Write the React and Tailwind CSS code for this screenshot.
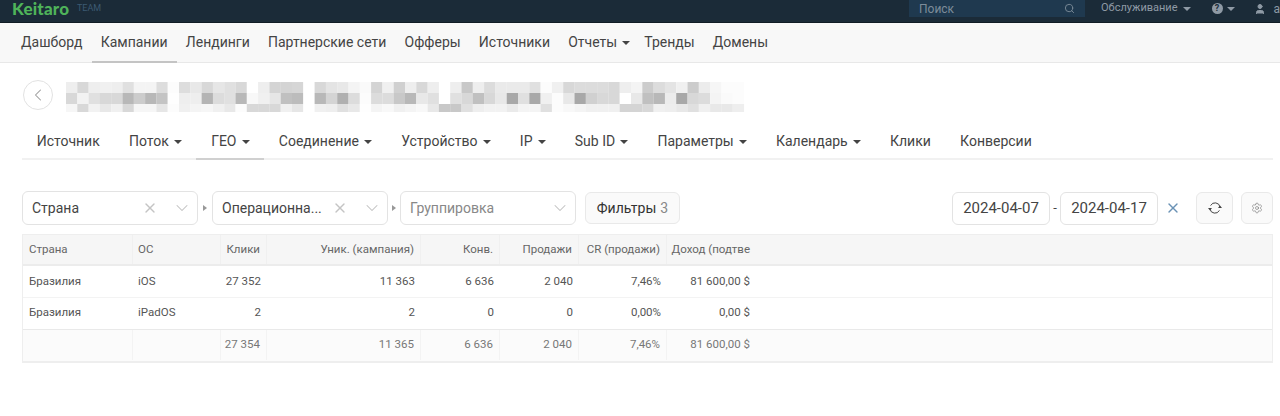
import { ChevronDown, ChevronLeft, Search, Settings, User, X } from 'lucide-react';

const mainNav = ['Дашборд', 'Кампании', 'Лендинги', 'Партнерские сети', 'Офферы', 'Источники', 'Отчеты', 'Тренды', 'Домены'];
const subNav = [
  ['Источник', false], ['Поток', true], ['ГЕО', true], ['Соединение', true], ['Устройство', true],
  ['IP', true], ['Sub ID', true], ['Параметры', true], ['Календарь', true], ['Клики', false], ['Конверсии', false],
];

const columns = [
  { label: 'Страна', w: 'w-[110px]' },
  { label: 'ОС', w: 'w-[88px]' },
  { label: 'Клики', w: 'w-[46px]', right: true },
  { label: 'Уник. (кампания)', w: 'w-[154px]', right: true },
  { label: 'Конв.', w: 'w-[79px]', right: true },
  { label: 'Продажи', w: 'w-[79px]', right: true },
  { label: 'CR (продажи)', w: 'w-[88px]', right: true },
  { label: 'Доход (подтве', w: 'w-[89px]', right: true },
];
const rows = [
  ['Бразилия', 'iOS', '27 352', '11 363', '6 636', '2 040', '7,46%', '81 600,00 $'],
  ['Бразилия', 'iPadOS', '2', '2', '0', '0', '0,00%', '0,00 $'],
];
const totals = ['', '', '27 354', '11 365', '6 636', '2 040', '7,46%', '81 600,00 $'];

function Caret() {
  return <span className="ml-[5px] inline-block border-x-[4px] border-t-[4px] border-x-transparent border-t-current align-middle" />;
}

// размытый заголовок кампании, значения серого по ячейкам
const mosaic = [
  'ee d8 ee f0 ee e0 f4 f4 dd fc dd e8 d8 e6 e0 d8 ff ee d4 d4 d6 ff d8 e4 e8 f4 fa d4 f0 d0 ee d8 ee ff ee c8 ee dc ea ea ea e0 fc f0 d8 dc dc dc d8 ee f4 cc dc e4 f0 cc ec f6 fc fc',
  'd8 f2 e0 d8 d8 b8 cc b8 c4 fe ee ee b4 dc e0 b8 f8 f0 e6 c0 bc ff b8 d4 b0 dc fc dc dc c8 b8 e8 e0 ff e0 d8 c0 d8 e8 a8 e0 a8 f0 fc e8 a8 d0 d8 d8 ff e8 c0 b8 ec a8 d8 dc f4 fa fc',
  'f6 d8 f2 e8 f0 d8 f6 f6 e6 fc f0 f4 f6 f0 e8 fc d8 d8 d8 f0 e6 ff f0 ee e0 e8 fe f4 f8 f0 f4 f8 e8 c8 c8 e0 ee f2 f2 ea f4 f4 e0 fc f8 f4 f0 f0 f0 d4 d4 d8 f0 ee e8 e0 f0 e8 e8 ee',
];
const mosaicY = [0, 11, 22];
const mosaicH = [11, 11, 8];

function Mosaic() {
  return (
    <svg width="680" height="30" viewBox="0 0 680 30" className="block">
      {mosaic.flatMap((row, y) =>
        row.split(' ').map((v, x) => (
          <rect key={`${x}-${y}`} x={x * 11.3} y={mosaicY[y]} width="11.4" height={mosaicH[y]} fill={`#${v}${v}${v}`} />
        ))
      )}
    </svg>
  );
}

function RefreshIcon() {
  return (
    <svg width="14" height="14" viewBox="0 0 14 14" fill="none">
      <path d="M2.6 4.6A5 5 0 0 1 12 6M11.4 9.4A5 5 0 0 1 2 8" stroke="#444" strokeWidth="1" />
      <path d="M0 7h4L2 9.4zM10 7h4L12 4.6z" fill="#444" />
    </svg>
  );
}

function Select({ text, clear, placeholder }) {
  return (
    <div className="w-[176px] h-[34px] flex items-center pl-[9px] pr-[5px] bg-white border border-[#e3e3e3] rounded-md text-[14px]">
      <span className={`flex-1 ${placeholder ? 'text-[#888]' : 'text-[#444]'}`}>{text}</span>
      {clear && <X size={16} strokeWidth={2} className="text-[#c4c4c4] mr-[14px]" />}
      <ChevronDown size={20} strokeWidth={1.25} className="text-[#c0c0c0]" />
    </div>
  );
}

export default function App() {
  return (
    <div className="h-[416px] overflow-hidden bg-white font-['Roboto',sans-serif] text-[#444]">
      <header className="h-[23px] bg-[#1b2b38] border-b border-[#111c25] flex items-start pl-3 text-[#8c99a5] overflow-hidden">
        <div className="h-[17px] flex items-center shrink-0">
          <span className="text-[#4fb35a] text-[17px] tracking-[0.2px] font-black leading-[17px] font-['Lato',sans-serif] w-[65px]">Keitaro</span>
          <span className="text-[#3c5a72] text-[9px] w-[24px]">TEAM</span>
        </div>
        <div className="ml-[808px] flex items-center h-[17px] shrink-0">
          <div className="w-[176px] h-full bg-[#1f394f] flex items-center justify-between px-[10px] text-[#7d8c99] text-[12px]">
            <span>Поиск</span>
            <Search size={11} />
          </div>
          <span className="ml-4 flex items-center text-[11px] text-[#8f9aa5]">Обслуживание<Caret /></span>
          <span className="ml-[21px] w-[11px] h-[11px] rounded-full bg-[#8f9aa5] text-[#1b2b38] text-[9px] font-bold flex items-center justify-center">?</span>
          <span className="text-[#8f9aa5] -ml-[1px]"><Caret /></span>
          <User size={12} className="ml-[19px] text-[#8f9aa5] fill-current" />
          <span className="ml-[8px] text-[12px]">ab</span>
        </div>
      </header>

      <nav className="h-[40px] bg-[#f8f8f8] border-b border-[#e8e8e8] flex pl-3 text-[14px]">
        {mainNav.map((item) => (
          <div key={item} className={`px-[9.1px] pt-[1px] flex items-center border-b-2 h-[40px] ${item === 'Кампании' ? 'border-[#c4c4c4]' : 'border-transparent'} ${item === 'Отчеты' ? '-mr-[4px]' : ''}`}>
            {item}
            {item === 'Отчеты' && <Caret />}
          </div>
        ))}
      </nav>

      <div className="flex items-center h-[64px] pl-[23px]">
        <button className="w-[30px] h-[30px] rounded-full border border-[#e2e2e2] flex items-center justify-center text-[#999]">
          <ChevronLeft size={20} strokeWidth={1.25} />
        </button>
        <div className="ml-[13px] mt-[3px]"><Mosaic /></div>
      </div>

      <div className="ml-[22px] mr-[7px] mt-[2px] h-[31px] border-b-2 border-[#f1f1f1] flex text-[14px]">
        {subNav.map(([item, caret]) => (
          <div key={item} className={`h-[31px] px-[14.65px] flex items-start pt-[2px] border-b-2 ${item === 'ГЕО' ? 'border-[#d0d0d0]' : 'border-transparent'}`}>
            <span className="flex items-center">{item}{caret && <Caret />}</span>
          </div>
        ))}
      </div>

      <div className="flex items-center pl-[22px] pr-[7px] mt-[31px]">
        <Select text="Страна" clear />
        <span className="mx-[5px] w-0 h-0 border-y-[3.5px] border-l-[4px] border-y-transparent border-l-[#999]" />
        <Select text="Операционна..." clear />
        <span className="mx-[4px] w-0 h-0 border-y-[3.5px] border-l-[4px] border-y-transparent border-l-[#999]" />
        <Select text="Группировка" placeholder />
        <div className="ml-[9px] w-[95px] h-[32px] flex items-center justify-center gap-1 bg-[#fafafa] border border-[#e9e9e9] rounded-md text-[14px] text-[#333]">
          Фильтры <span className="text-[#888]">3</span>
        </div>
        <div className="ml-auto flex items-center">
          <div className="w-[98px] h-[33px] flex items-center justify-center border border-[#e3e3e3] rounded-md text-[15px]">2024-04-07</div>
          <span className="w-[10px] text-center text-[13px]">-</span>
          <div className="w-[98px] h-[33px] flex items-center justify-center border border-[#e3e3e3] rounded-md text-[15px]">2024-04-17</div>
          <X size={16} strokeWidth={2} className="ml-[7px] text-[#6a92b5]" />
          <div className="ml-[15px] w-[37px] h-[32px] flex items-center justify-center bg-[#fafafa] border border-[#e9e9e9] rounded-md">
            <RefreshIcon />
          </div>
          <div className="ml-[8px] w-[32px] h-[32px] flex items-center justify-center bg-[#fafafa] border border-[#e9e9e9] rounded-md text-[#777]">
            <Settings size={12} strokeWidth={1.25} />
          </div>
        </div>
      </div>

      <div className="ml-[22px] mr-[7px] mt-[9px] border border-[#eeeeee] border-b-2 text-[11.5px] text-[#555]">
        <div className="flex h-[31px] bg-[#f6f6f6] border-b-2 border-[#ececec] text-[#666]">
          {columns.map((col) => (
            <div key={col.label} className={`${col.w} shrink-0 pl-[5px] first:pl-[6px] pr-[6px] flex items-center whitespace-nowrap border-r border-[#f0f0f0] last:border-r-0 ${col.right ? 'justify-end' : ''}`}>
              {col.label}
            </div>
          ))}
        </div>
        {rows.map((row, i) => (
          <div key={i} className={`flex ${i === 0 ? 'h-[32px] border-b border-[#f3f3f3]' : 'h-[31px] pb-[1px]'}`}>
            {row.map((cell, j) => (
              <div key={j} className={`${columns[j].w} shrink-0 pl-[5px] first:pl-[6px] pr-[6px] flex items-center whitespace-nowrap ${columns[j].right ? 'justify-end' : ''}`}>{cell}</div>
            ))}
          </div>
        ))}
        <div className="flex h-[32px] pb-[1px] bg-[#fbfbfb] border-t border-[#e9e9e9] text-[#777]">
          {totals.map((cell, j) => (
            <div key={j} className={`${columns[j].w} shrink-0 pl-[5px] pr-[6px] flex items-center whitespace-nowrap border-r border-[#f3f3f3] last:border-r-0 ${columns[j].right ? 'justify-end' : ''}`}>{cell}</div>
          ))}
        </div>
      </div>
    </div>
  );
}
